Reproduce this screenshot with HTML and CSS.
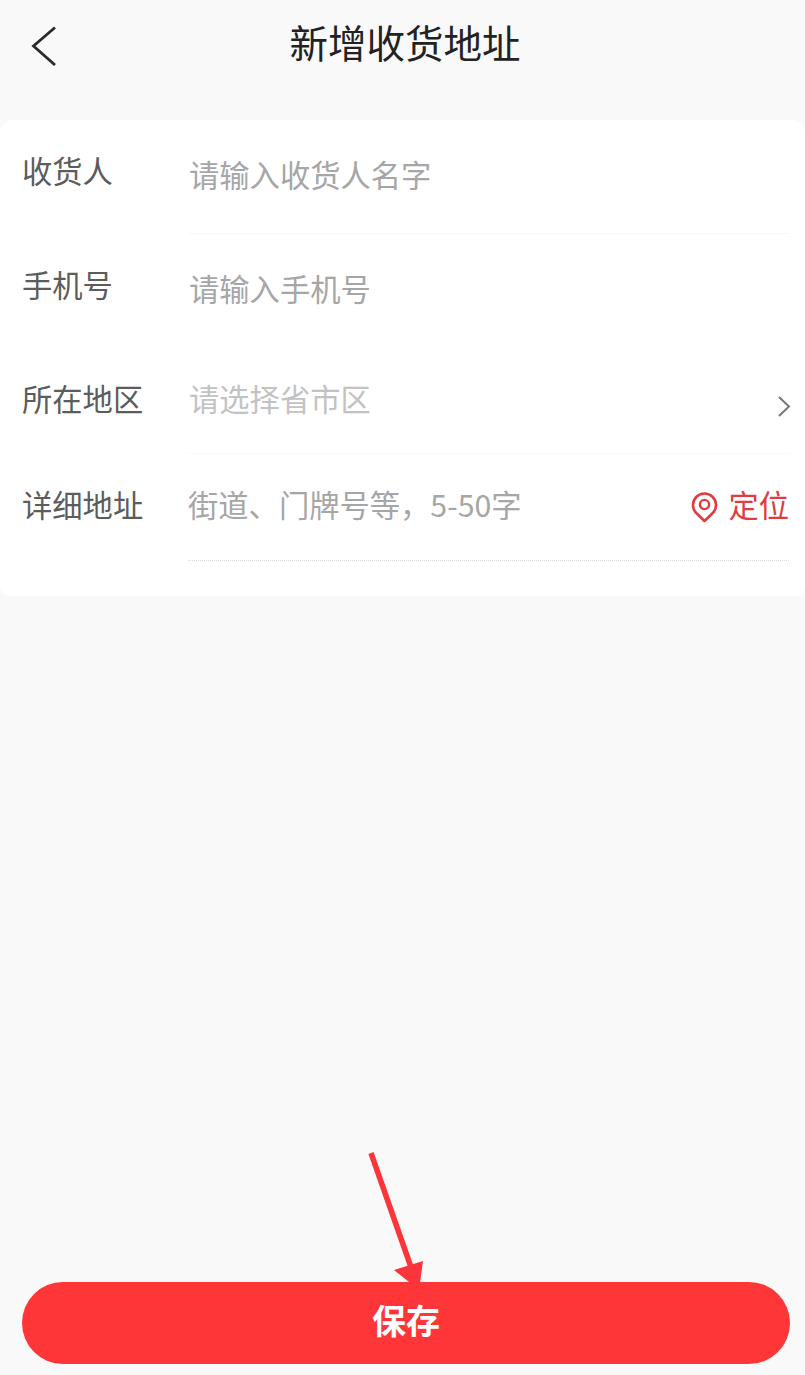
FILE: index.html
```html
<!DOCTYPE html>
<html lang="zh-CN">
  <head>
    <meta charset="UTF-8" />
    <meta name="viewport" content="width=device-width, initial-scale=1.0" />
    <title>新增收货地址</title>

    <link rel="stylesheet" href="styles.css">
  </head>
  <body>
    <header class="topbar">
      <svg class="topbar__back" width="26" height="40" viewBox="0 0 26 40">
        <path d="M24 1.5 L2.5 20 L24 39" fill="none" stroke="#2a2a2a" stroke-width="2.8" />
      </svg>
      <h1 class="topbar__title">新增收货地址</h1>
    </header>

    <section class="form">
      <div class="row row--name">
        <span class="row__label">收货人</span>
        <div class="row__field row__field--low">
          <span class="row__hint">请输入收货人名字</span>
        </div>
      </div>
      <div class="row row--phone">
        <span class="row__label">手机号</span>
        <div class="row__field row__field--low row__field--plain">
          <span class="row__hint">请输入手机号</span>
        </div>
      </div>
      <div class="row row--area">
        <span class="row__label">所在地区</span>
        <div class="row__field">
          <span class="row__hint row__hint--light">请选择省市区</span>
          <svg class="row__chevron" width="14" height="22" viewBox="0 0 14 22">
            <path d="M2 1 L12 10.5 L2 20" fill="none" stroke="#777" stroke-width="2" />
          </svg>
        </div>
      </div>
      <div class="row row--detail">
        <span class="row__label">详细地址</span>
        <div class="row__field row__field--dotted">
          <span class="row__hint row__hint--flush">街道、门牌号等，5-50字</span>
          <span class="locate">
            <svg class="locate__icon" width="27" height="31" viewBox="0 0 27 31">
              <path d="M13.5 29 L5 20.75 A11.5 11.5 0 1 1 22 20.75 Z" fill="none" stroke="#e53a3c" stroke-width="2.6" stroke-linejoin="round" />
              <circle cx="13.5" cy="12.5" r="4.6" fill="none" stroke="#e53a3c" stroke-width="2.4" />
            </svg>
            定位
          </span>
        </div>
      </div>
    </section>

    <button class="save">保存</button>

    <svg class="arrow" width="80" height="140" viewBox="0 0 80 140">
      <path d="M21 1 L62 118" fill="none" stroke="#fb3539" stroke-width="5.5" />
      <path d="M44 118 L73 109 L69 138 Z" fill="#fb3539" />
    </svg>
  </body>
</html>
```

FILE: styles.css
```css
html,
body {
  margin: 0;
  height: 100%;
}
body {
  position: relative;
  height: 1375px;
  overflow: hidden;
  display: flex;
  flex-direction: column;
  background: #f9f9fa;
  font-family: "Noto Sans CJK SC", "Noto Sans", sans-serif;
}

.topbar {
  height: 120px;
  flex: none;
  position: relative;
}
.topbar__back {
  position: absolute;
  left: 31px;
  top: 26px;
}
.topbar__title {
  margin: 0;
  padding: 14px 0 0 5px;
  font-size: 38.5px;
  line-height: 54px;
  font-weight: 400;
  text-align: center;
  color: #222;
}

.form {
  height: 476px;
  flex: none;
  background: #fff;
  border-radius: 14px 14px 10px 10px;
}

.row {
  display: flex;
  box-sizing: border-box;
  padding-left: 22px;
  font-size: 30.3px;
  line-height: 40px;
}
.row__label {
  width: 166px;
  flex: none;
  color: #5c5c5c;
}
.row--name {
  height: 114px;
  padding-top: 30px;
}
.row--phone {
  height: 113px;
  padding-top: 30px;
}
.row--area {
  height: 107px;
  padding-top: 31px;
}
.row--detail {
  height: 107px;
  padding-top: 30px;
}

.row__field {
  flex: 1;
  display: flex;
  justify-content: space-between;
  margin-right: 16px;
  border-bottom: 1px solid #f8f8f8;
}
.row__field--low .row__hint {
  position: relative;
  top: 4px;
}
.row__field--plain {
  border-bottom-color: #fcfcfc;
}
.row__field--dotted {
  border-bottom: 1px dotted #dcdcdc;
}
.row__hint {
  margin-left: 1px;
  color: #a6a6a6;
}
.row__hint--light {
  color: #c2c2c2;
}
.row__hint--flush {
  margin-left: 0;
}
.row__chevron {
  margin: 18px -2px 0 0;
}

.locate {
  display: flex;
  align-items: flex-start;
  gap: 10px;
  color: #e23b3d;
}
.locate__icon {
  margin-top: 8px;
}

.save {
  display: block;
  margin: auto 15px 11px 22px;
  height: 82px;
  flex: none;
  padding: 0 0 7px;
  border: 0;
  border-radius: 41px;
  background: #fe3638;
  color: #fff;
  font-family: inherit;
  font-size: 34px;
  font-weight: 700;
}

/* annotation on top of the screenshot */
.arrow {
  position: absolute;
  left: 350px;
  top: 1152px;
}
```
